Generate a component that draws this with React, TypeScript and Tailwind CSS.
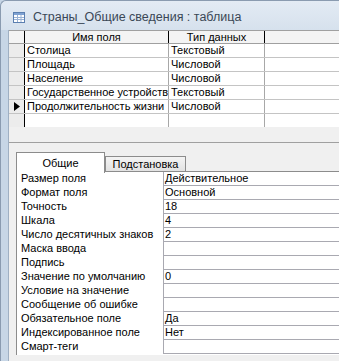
import React from 'react'

const fields = [
  { name: 'Столица', type: 'Текстовый' },
  { name: 'Площадь', type: 'Числовой' },
  { name: 'Население', type: 'Числовой' },
  { name: 'Государственное устройство', type: 'Текстовый' },
  { name: 'Продолжительность жизни', type: 'Числовой', current: true },
]

const props = [
  ['Размер поля', 'Действительное'],
  ['Формат поля', 'Основной'],
  ['Точность', '18'],
  ['Шкала', '4'],
  ['Число десятичных знаков', '2'],
  ['Маска ввода', ''],
  ['Подпись', ''],
  ['Значение по умолчанию', '0'],
  ['Условие на значение', ''],
  ['Сообщение об ошибке', ''],
  ['Обязательное поле', 'Да'],
  ['Индексированное поле', 'Нет'],
  ['Смарт-теги', ''],
]

function TableIcon() {
  return (
    <svg width="12" height="11" viewBox="0 0 12 11" className="shrink-0">
      <rect x="0.5" y="0.5" width="11" height="10" fill="#ffffff" stroke="#5b7fb0" />
      <rect x="1" y="1" width="10" height="2" fill="#7fa2d2" />
      <path d="M1 5.5H11M1 7.5H11M4.5 3V10M8 3V10" stroke="#9ab3d6" strokeWidth="1" />
    </svg>
  )
}

export default function App() {
  return (
    <div className="w-[339px] h-[361px] overflow-hidden bg-[#c7d6e6] flex flex-col font-['Liberation_Sans',Arial,sans-serif] text-[11px] text-black">
      {/* Title bar */}
      <div className="h-[30px] shrink-0 rounded-tl-[6px] border-t border-l border-[#8a9bb0] bg-gradient-to-b from-[#e3ebf4] to-[#d6e1ed] flex items-center pl-[12px] pt-[3px] gap-[8px]">
        <TableIcon />
        <span className="text-[12.5px] text-[#3a4756] leading-none whitespace-nowrap">Страны_Общие сведения : таблица</span>
      </div>

      <div className="flex-1 flex min-h-0">
        {/* Left frame */}
        <div className="w-[9px] shrink-0 border-l border-[#8a9bb0] border-r border-r-[#9fb0c3] bg-[#c7d6e6]" />

        {/* Client area */}
        <div className="flex-1 bg-[#f0f0f0] flex flex-col min-w-0">
          {/* Field grid */}
          <div className="bg-white shrink-0">
            <div className="flex h-[14px] border-y border-[#a0a0a0] bg-[#f4f4f4] leading-[12px]">
              <div className="w-[16px] shrink-0 border-r border-black" />
              <div className="w-[144px] shrink-0 border-r border-black text-center">Имя поля</div>
              <div className="w-[96px] shrink-0 border-r border-black text-center">Тип данных</div>
              <div className="flex-1" />
            </div>
            {fields.map((f) => (
              <div key={f.name} className="flex h-[14px] border-b border-[#c4c4c4] leading-[13px]">
                <div className="w-[16px] shrink-0 border-r border-black bg-[#ececec] flex items-center justify-center">
                  {f.current && (
                    <svg width="6" height="9" viewBox="0 0 6 9">
                      <path d="M0 0L6 4.5L0 9Z" fill="#000" />
                    </svg>
                  )}
                </div>
                <div className="w-[144px] shrink-0 border-r border-[#a8a8a8] pl-[2px] whitespace-nowrap overflow-hidden">{f.name}</div>
                <div className="w-[96px] shrink-0 border-r border-[#a8a8a8] pl-[2px] whitespace-nowrap">{f.type}</div>
                <div className="flex-1" />
              </div>
            ))}
            <div className="flex h-[13px]">
              <div className="w-[16px] shrink-0 border-r border-black bg-[#ececec]" />
              <div className="w-[144px] shrink-0 border-r border-[#a8a8a8]" />
              <div className="w-[96px] shrink-0 border-r border-[#a8a8a8]" />
              <div className="flex-1" />
            </div>
          </div>

          {/* Splitter */}
          <div className="h-[15px] shrink-0" />
          <div className="h-px shrink-0 bg-[#a0a0a0]" />

          {/* Property sheet */}
          <div className="flex-1 pl-[7px] pt-[8px] flex flex-col">
            <div className="flex items-end h-[21px] shrink-0">
              <div className="w-[89px] h-[21px] border-t border-x border-[#8c8c8c] bg-white text-center leading-[20px] relative z-10 -mb-px">Общие</div>
              <div className="w-[81px] h-[16px] border border-[#8c8c8c] bg-gradient-to-b from-[#f4f4f4] to-[#e2e2e2] text-center leading-[14px]">Подстановка</div>
              <div className="flex-1 border-b border-[#8c8c8c]" />
            </div>
            <div className="bg-white border-l border-[#8c8c8c] h-[183px] shrink-0">
              {props.map(([label, value]) => (
                <div key={label} className="flex h-[14px] leading-[13px]">
                  <div className="w-[146px] shrink-0 pl-[4px] whitespace-nowrap">{label}</div>
                  <div className="flex-1 border-l border-b border-[#a9a9b1] pl-[1px] whitespace-nowrap">{value}</div>
                </div>
              ))}
            </div>
          </div>
        </div>
      </div>
    </div>
  )
}
